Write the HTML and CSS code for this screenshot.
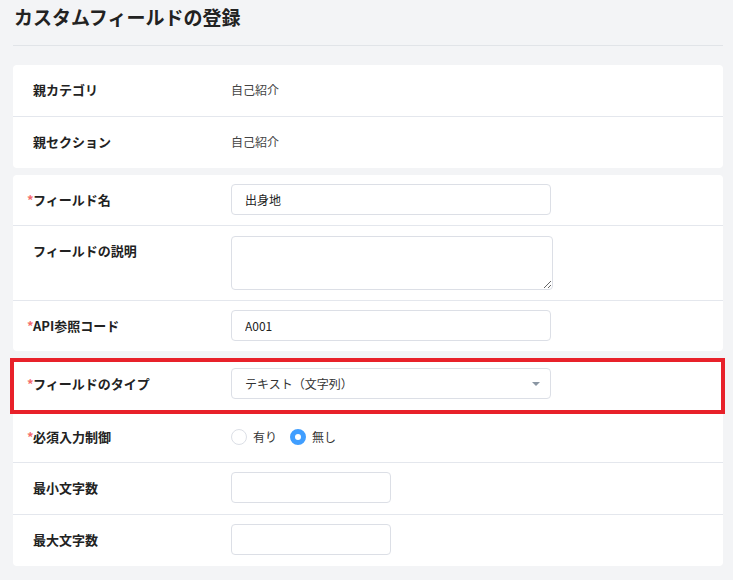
FILE: index.html
```html
<!DOCTYPE html>
<html>
  <head>
    <title>カスタムフィールドの登録</title>
    <link rel="stylesheet" href="styles.css">
  </head>
  <body>
    <div class="page">
      <h1 class="page-title">カスタムフィールドの登録</h1>

      <div class="card card-info">
        <div class="row">
          <div class="label">親カテゴリ</div>
          <div class="value">自己紹介</div>
        </div>
        <div class="row">
          <div class="label">親セクション</div>
          <div class="value">自己紹介</div>
        </div>
      </div>

      <div class="card card-top">
        <div class="row">
          <div class="label required">フィールド名</div>
          <div class="value"><input class="input" type="text" value="出身地" /></div>
        </div>
        <div class="row">
          <div class="label">フィールドの説明</div>
          <div class="value"><textarea class="textarea"></textarea></div>
        </div>
        <div class="row">
          <div class="label required">API参照コード</div>
          <div class="value"><input class="input" type="text" value="A001" /></div>
        </div>
      </div>

      <div class="highlight">
        <div class="row row-flat">
          <div class="label required">フィールドのタイプ</div>
          <div class="value">
            <div class="select">
              <span>テキスト（文字列）</span>
              <span class="caret"></span>
            </div>
          </div>
        </div>
      </div>

      <div class="card card-bottom">
        <div class="row row-radio">
          <div class="label required">必須入力制御</div>
          <div class="value radios">
            <label class="radio"><span class="dot"></span>有り</label>
            <label class="radio"><span class="dot checked"></span>無し</label>
          </div>
        </div>
        <div class="row">
          <div class="label">最小文字数</div>
          <div class="value"><input class="input input-small" type="text" /></div>
        </div>
        <div class="row">
          <div class="label">最大文字数</div>
          <div class="value"><input class="input input-small" type="text" /></div>
        </div>
      </div>
    </div>
  </body>
</html>
```

FILE: styles.css
```css
body {
  font-family: "Noto Sans CJK JP", "Noto Sans", sans-serif;
  background-color: #f3f4f6;
  color: #222;
  margin: 0;
  padding: 0;
}

.page {
  padding: 0 10px 0 13px;
}

.page-title {
  font-size: 19px;
  font-weight: bold;
  margin: 0;
  padding: 3px 0 0 1px;
  height: 42px;
  line-height: 28px;
  border-bottom: 1px solid #e1e4e8;
  margin-bottom: 19px;
}

.card {
  background-color: #ffffff;
  border-radius: 4px;
  margin-bottom: 7px;
}

.card-bottom {
  border-radius: 0 0 4px 4px;
}

.row {
  display: grid;
  grid-template-columns: 218px 1fr;
  padding: 9px 0 10px;
  border-bottom: 1px solid #e4e7ed;
}

.row:last-child {
  border-bottom: none;
}

.card-info .row,
.card-bottom .row {
  padding: 9px 0 11px;
}

.label {
  padding-left: 20px;
  font-size: 13px;
  font-weight: bold;
  line-height: 31px;
  color: #222;
}

.label.required::before {
  content: "*";
  color: #f56c6c;
  margin-left: -6px;
  display: inline-block;
  width: 6px;
}

.value {
  font-size: 12px;
  line-height: 31px;
  color: #444;
}

.input {
  box-sizing: border-box;
  width: 320px;
  height: 31px;
  border: 1px solid #dcdfe6;
  border-radius: 4px;
  padding: 0 13px;
  font-family: inherit;
  font-size: 12px;
  color: #222;
  display: block;
}

.input-small {
  width: 160px;
}

.textarea {
  box-sizing: border-box;
  display: block;
  width: 322px;
  height: 54px;
  border: 1px solid #dcdfe6;
  border-radius: 4px;
  font-family: inherit;
  margin-top: 1px;
}

.highlight {
  border: 4px solid #e8212a;
  background-color: #ffffff;
  margin: 0 -2px 0 -3px;
}

.row-flat {
  grid-template-columns: 217px 1fr;
  padding: 6px 0 11px;
  border-bottom: none;
}

.row-flat .label {
  padding-left: 19px;
}

.select {
  box-sizing: border-box;
  width: 320px;
  height: 31px;
  border: 1px solid #dcdfe6;
  border-radius: 4px;
  padding: 0 10px 0 13px;
  display: flex;
  justify-content: space-between;
  align-items: center;
  color: #333;
}

.caret {
  width: 0;
  height: 0;
  border-left: 4px solid transparent;
  border-right: 4px solid transparent;
  border-top: 4px solid #8a96a3;
}

.card-bottom .row-radio {
  padding: 7px 0 10px;
}

.radios {
  display: flex;
  gap: 13px;
  align-items: center;
}

.radio {
  display: flex;
  align-items: center;
  gap: 6px;
  color: #333;
}

.dot {
  box-sizing: border-box;
  width: 16px;
  height: 16px;
  border-radius: 50%;
  border: 1px solid #dcdfe6;
  background-color: #ffffff;
}

.dot.checked {
  border: 5px solid #409eff;
}
```
